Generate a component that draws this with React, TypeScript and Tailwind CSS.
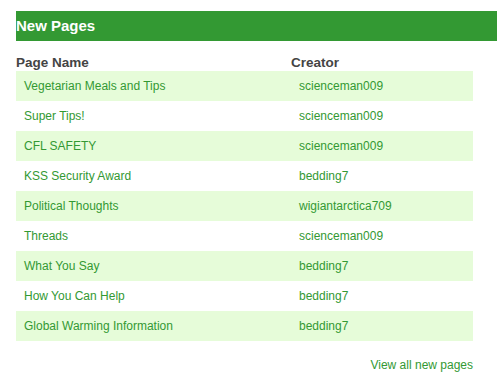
import React from "react";

const pages = [
  { name: "Vegetarian Meals and Tips", creator: "scienceman009" },
  { name: "Super Tips!", creator: "scienceman009" },
  { name: "CFL SAFETY", creator: "scienceman009" },
  { name: "KSS Security Award", creator: "bedding7" },
  { name: "Political Thoughts", creator: "wigiantarctica709" },
  { name: "Threads", creator: "scienceman009" },
  { name: "What You Say", creator: "bedding7" },
  { name: "How You Can Help", creator: "bedding7" },
  { name: "Global Warming Information", creator: "bedding7" },
];

const App = () => {
  return (
    <div className="w-[497px] h-[381px] bg-white pt-[11px] pl-4 font-['Liberation_Sans',Arial,sans-serif]">
      <div className="h-[30px] bg-[#339933] flex items-center text-white font-bold text-[15px]">
        New Pages
      </div>
      <div className="w-[457px] mt-[14px]">
        <div className="flex h-4 items-center text-[13.5px] font-bold text-[#444444]">
          <div className="w-[275px]">Page Name</div>
          <div>Creator</div>
        </div>
        <div>
          {pages.map((p, i) => (
            <div
              key={p.name}
              className={
                "flex h-[30px] items-center text-[12px] text-[#339933] " +
                (i % 2 === 0 ? "bg-[#e6fcd9]" : "bg-white")
              }
            >
              <div className="w-[275px] pl-2">{p.name}</div>
              <div className="pl-2">{p.creator}</div>
            </div>
          ))}
        </div>
        <div className="mt-[15px] text-right text-[12px] text-[#339933]">
          View all new pages
        </div>
      </div>
    </div>
  );
};

export default App;
